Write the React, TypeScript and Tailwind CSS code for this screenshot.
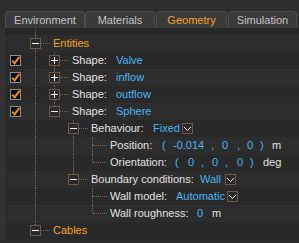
import type { ReactNode } from 'react';

const dots = 'border-dotted border-[#76695a]';
const blue = 'text-[#4bb5f4]';
const white = 'text-[#e2e2e2]';

const Expander = ({ open }: { open: boolean }) => (
  <svg width="11" height="11" viewBox="0 0 11 11" className="shrink-0">
    <rect x="0.5" y="0.5" width="10" height="10" fill="#2a2a2a" stroke="#6e5a44" />
    <line x1="2" y1="5.5" x2="9" y2="5.5" stroke="#f2f2f2" />
    {!open && <line x1="5.5" y1="2" x2="5.5" y2="9" stroke="#f2f2f2" />}
  </svg>
);

const Check = () => (
  <svg width="11" height="11" viewBox="0 0 11 11">
    <rect x="0.5" y="0.5" width="10" height="10" fill="#050505" stroke="#8e8e8e" />
    <path d="M2.2 5.6 L4.6 8.4 L9.4 1.8" fill="none" stroke="#f28c0a" strokeWidth="2" />
  </svg>
);

const Dropdown = () => (
  <svg width="11" height="11" viewBox="0 0 11 11" className="shrink-0">
    <rect x="0.5" y="0.5" width="10" height="10" fill="#2a2a2a" stroke="#6e5a44" />
    <polyline points="2,4 5.5,7.5 9,4" fill="none" stroke="#f0f0f0" />
  </svg>
);

type Row = {
  anc: boolean[];
  kind: 'box' | 'leaf';
  open?: boolean;
  last?: boolean;
  check?: boolean;
  content: ReactNode;
};

const shape = (name: string) => (
  <>
    <span className={`w-[44px] ${white}`}>Shape:</span>
    <span className={blue}>{name}</span>
  </>
);

const rows: Row[] = [
  { anc: [], kind: 'box', open: true, content: <span className="text-[#f7a51c]">Entities</span> },
  { anc: [true], kind: 'box', check: true, content: shape('Valve') },
  { anc: [true], kind: 'box', check: true, content: shape('inflow') },
  { anc: [true], kind: 'box', check: true, content: shape('outflow') },
  { anc: [true], kind: 'box', open: true, last: true, check: true, content: shape('Sphere') },
  {
    anc: [true, false],
    kind: 'box',
    open: true,
    content: (
      <>
        <span className={`w-[62px] ${white}`}>Behaviour:</span>
        <span className={`w-[29px] ${blue}`}>Fixed</span>
        <Dropdown />
      </>
    ),
  },
  {
    anc: [true, false, true],
    kind: 'leaf',
    content: (
      <>
        <span className={`w-[52px] ${white}`}>Position:</span>
        <span className={`w-[11px] ${blue}`}>(</span>
        <span className={`w-[38px] ${blue}`}>-0.014</span>
        <span className={`w-[11px] ${blue}`}>,</span>
        <span className={`w-[15px] ${blue}`}>0</span>
        <span className={`w-[10px] ${blue}`}>,</span>
        <span className={`w-[13px] ${blue}`}>0</span>
        <span className={`w-[12px] ${blue}`}>)</span>
        <span className={white}>m</span>
      </>
    ),
  },
  {
    anc: [true, false, true],
    kind: 'leaf',
    last: true,
    content: (
      <>
        <span className={`w-[65px] ${white}`}>Orientation:</span>
        <span className={`w-[13px] ${blue}`}>(</span>
        <span className={`w-[13px] ${blue}`}>0</span>
        <span className={`w-[11px] ${blue}`}>,</span>
        <span className={`w-[13px] ${blue}`}>0</span>
        <span className={`w-[12px] ${blue}`}>,</span>
        <span className={`w-[13px] ${blue}`}>0</span>
        <span className={`w-[13px] ${blue}`}>)</span>
        <span className={white}>deg</span>
      </>
    ),
  },
  {
    anc: [true, false],
    kind: 'box',
    open: true,
    last: true,
    content: (
      <>
        <span className={`w-[109px] ${white}`}>Boundary conditions:</span>
        <span className={`w-[25px] ${blue}`}>Wall</span>
        <Dropdown />
      </>
    ),
  },
  {
    anc: [true, false, false],
    kind: 'leaf',
    content: (
      <>
        <span className={`w-[66px] ${white}`}>Wall model:</span>
        <span className={`w-[51px] ${blue}`}>Automatic</span>
        <Dropdown />
      </>
    ),
  },
  {
    anc: [true, false, false],
    kind: 'leaf',
    last: true,
    content: (
      <>
        <span className={`w-[87px] ${white}`}>Wall roughness:</span>
        <span className={`w-[15px] ${blue}`}>0</span>
        <span className={white}>m</span>
      </>
    ),
  },
  { anc: [], kind: 'box', open: true, last: true, content: <span className="text-[#f7a51c]">Cables</span> },
];

const tabs = [
  { label: 'Environment', w: 'w-[80px]', ml: '' },
  { label: 'Materials', w: 'w-[70px]', ml: '' },
  { label: 'Geometry', w: 'w-[71px]', ml: 'ml-[1px]', active: true },
  { label: 'Simulation', w: 'w-[69px]', ml: 'ml-[1px]' },
];

const TreeRow = ({ row, index }: { row: Row; index: number }) => (
  <div className={`flex h-[17px] ${index % 2 ? 'bg-[#292929]' : 'bg-[#2d2d2d]'}`}>
    <div className="flex w-[21px] shrink-0 items-center pl-[5px]">{row.check && <Check />}</div>
    {row.anc.map((on, i) => (
      <div key={i} className="w-[19px] shrink-0 pl-[9px]">
        {on && <div className={`h-full w-px border-l ${dots}`} />}
      </div>
    ))}
    {row.kind === 'box' ? (
      <div className="flex w-[27px] shrink-0">
        <div className="w-[4px]" />
        <div className="flex w-[11px] flex-col items-center">
          <div className={`h-[3px] w-px border-l ${dots}`} />
          <Expander open={!!row.open} />
          <div className={`w-px flex-1 ${row.last ? '' : `border-l ${dots}`}`} />
        </div>
        <div className="flex items-center">
          <div className={`w-[9px] border-t ${dots}`} />
        </div>
      </div>
    ) : (
      <div className="flex w-[27px] shrink-0">
        <div className="w-[9px]" />
        <div className="flex w-px flex-col">
          <div className={`h-[8px] border-l ${dots}`} />
          <div className={`flex-1 ${row.last ? '' : `border-l ${dots}`}`} />
        </div>
        <div className="flex items-center">
          <div className={`w-[14px] border-t ${dots}`} />
        </div>
      </div>
    )}
    <div className="flex items-center whitespace-nowrap">{row.content}</div>
  </div>
);

export default function App() {
  return (
    <div className="h-[243px] w-[299px] overflow-hidden bg-[#2b2b2b] font-['Liberation_Sans',Arial,sans-serif] text-[11px] leading-none">
      <div className="flex h-[28px] items-end bg-[#2e2e2e] pl-[5px]">
        {tabs.map((t) => (
          <div
            key={t.label}
            className={`flex h-[17px] items-center justify-center rounded-t-[4px] border border-b-0 border-[#4e4e4e] bg-[#3a3a3a] ${t.w} ${t.ml} ${
              t.active ? 'text-[#f7a51c]' : 'text-[#c4c4c4]'
            }`}
          >
            {t.label}
          </div>
        ))}
      </div>
      <div className="flex">
        <div className="w-[5px] shrink-0 bg-[#333333]" />
        <div className="flex-1">
          <div className="flex h-[7px] bg-[#272727]">
            <div className="w-[21px] shrink-0" />
            <div className="w-[19px] pl-[9px]">
              <div className={`h-full w-px border-l ${dots}`} />
            </div>
          </div>
          {rows.map((r, i) => (
            <TreeRow key={i} row={r} index={i} />
          ))}
        </div>
      </div>
    </div>
  );
}
